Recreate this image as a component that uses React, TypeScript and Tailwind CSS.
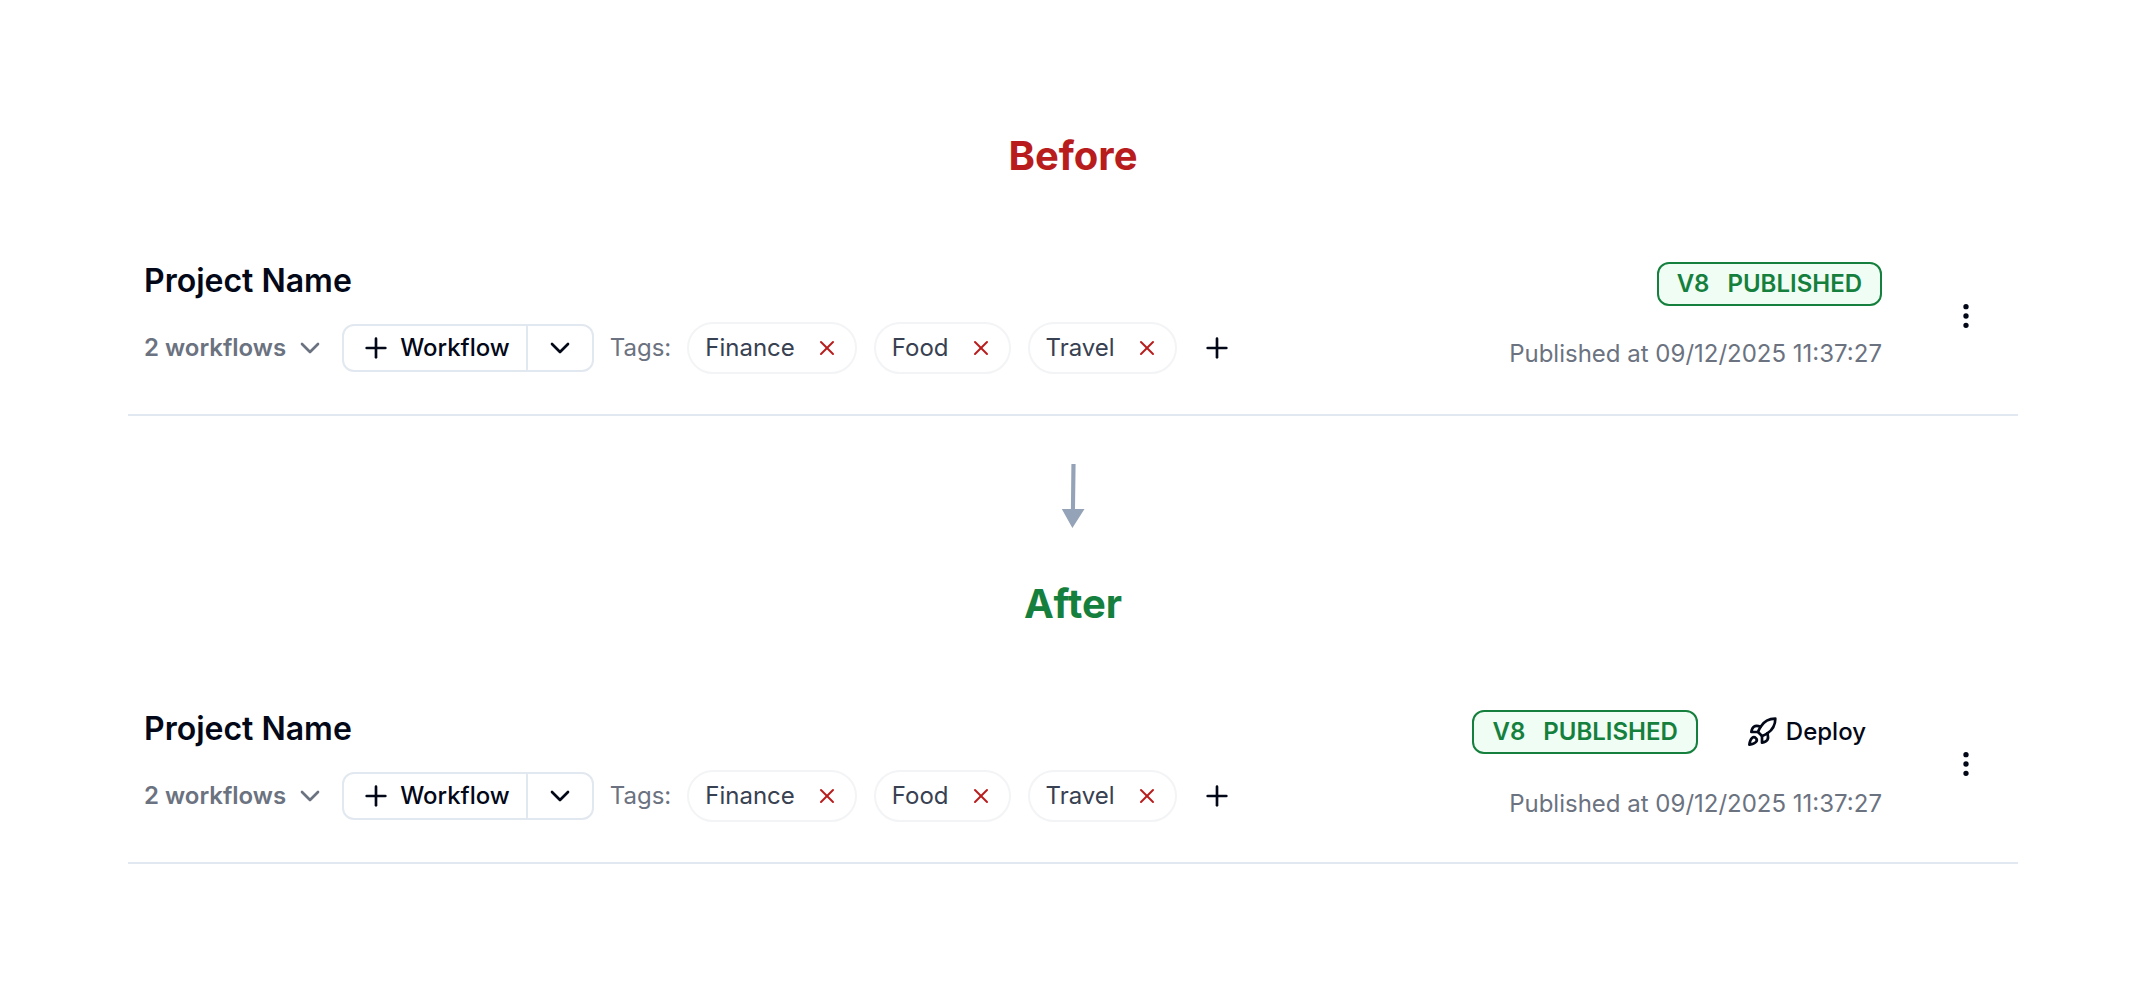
// Before / after view of the project header
import { ChevronDown, EllipsisVertical, Plus, Rocket, X } from 'lucide-react';

const TAGS = ['Finance', 'Food', 'Travel'];

interface ProjectHeaderProps {
  name: string;
  publishedAt: string;
  canDeploy?: boolean;
}

function TagPill({ label }: { label: string }) {
  return (
    <li className="flex h-[52px] items-center gap-5 rounded-full border-2 border-[#f3f4f6] px-4 text-[#374151]">
      <span>{label}</span>
      <button type="button" aria-label={`Remove ${label}`} className="text-[#b91c1c]">
        <X className="size-6" />
      </button>
    </li>
  );
}

function ProjectHeader({ name, publishedAt, canDeploy = false }: ProjectHeaderProps) {
  return (
    <header className="flex items-center justify-between border-b-2 border-[#e2e8f0] pb-10 pl-4 pr-5 text-2xl">
      <div className="flex flex-col gap-[18px]">
        <h3 className="text-[32px] font-semibold leading-[46px]">{name}</h3>

        <div className="flex items-center gap-4">
          <button type="button" className="flex items-center gap-2 font-semibold text-[#6b7280]">
            2 workflows
            <ChevronDown className="size-8" />
          </button>

          <div className="flex h-12 rounded-xl border-2 border-[#e2e8f0]">
            <button type="button" className="flex items-center gap-2 px-4 font-medium">
              <Plus className="size-8" />
              Workflow
            </button>
            <button type="button" aria-label="More workflow options" className="border-l-2 border-[#e2e8f0] px-4">
              <ChevronDown className="size-8" />
            </button>
          </div>

          <span className="text-[#6b7280]">Tags:</span>
          <ul className="flex items-center gap-[17px]">
            {TAGS.map((tag) => (
              <TagPill key={tag} label={tag} />
            ))}
          </ul>
          <button type="button" aria-label="Add tag" className="px-2">
            <Plus className="size-8" />
          </button>
        </div>
      </div>

      <div className="flex items-center gap-[52px]">
        <div className="flex flex-col items-end gap-8">
          <div className="flex items-center gap-8">
            <div className="flex h-11 items-center gap-[18px] rounded-xl border-2 border-[#15803d] bg-[#f0fdf4] px-[18px] font-semibold text-[#15803d]">
              <span>V8</span>
              <span>PUBLISHED</span>
            </div>
            {canDeploy && (
              <button type="button" className="flex h-12 items-center gap-2 px-4 font-medium">
                <Rocket className="size-8" />
                Deploy
              </button>
            )}
          </div>
          <p className="text-[#6b7280]">Published at {publishedAt}</p>
        </div>
        <button type="button" aria-label="Project actions" className="p-4">
          <EllipsisVertical className="size-8" />
        </button>
      </div>
    </header>
  );
}

function DownArrow() {
  return (
    <svg viewBox="0 0 24 64" className="mx-auto my-12 h-16 w-6 fill-[#94a3b8]" aria-hidden="true">
      <path d="M10.4 0H14.6L14 45H23.5L11.4 64L0.8 45H9.9Z" />
    </svg>
  );
}

export default function App() {
  return (
    <main className="bg-white px-32 py-32 font-['Inter',sans-serif] text-[#020817]">
      <section>
        <h2 className="mb-[74px] text-center text-[40px] font-bold leading-[56px] text-[#b91c1c]">Before</h2>
        <ProjectHeader name="Project Name" publishedAt="09/12/2025 11:37:27" />
      </section>

      <DownArrow />

      <section>
        <h2 className="mb-[74px] text-center text-[40px] font-bold leading-[56px] text-[#15803d]">After</h2>
        <ProjectHeader name="Project Name" publishedAt="09/12/2025 11:37:27" canDeploy />
      </section>
    </main>
  );
}
